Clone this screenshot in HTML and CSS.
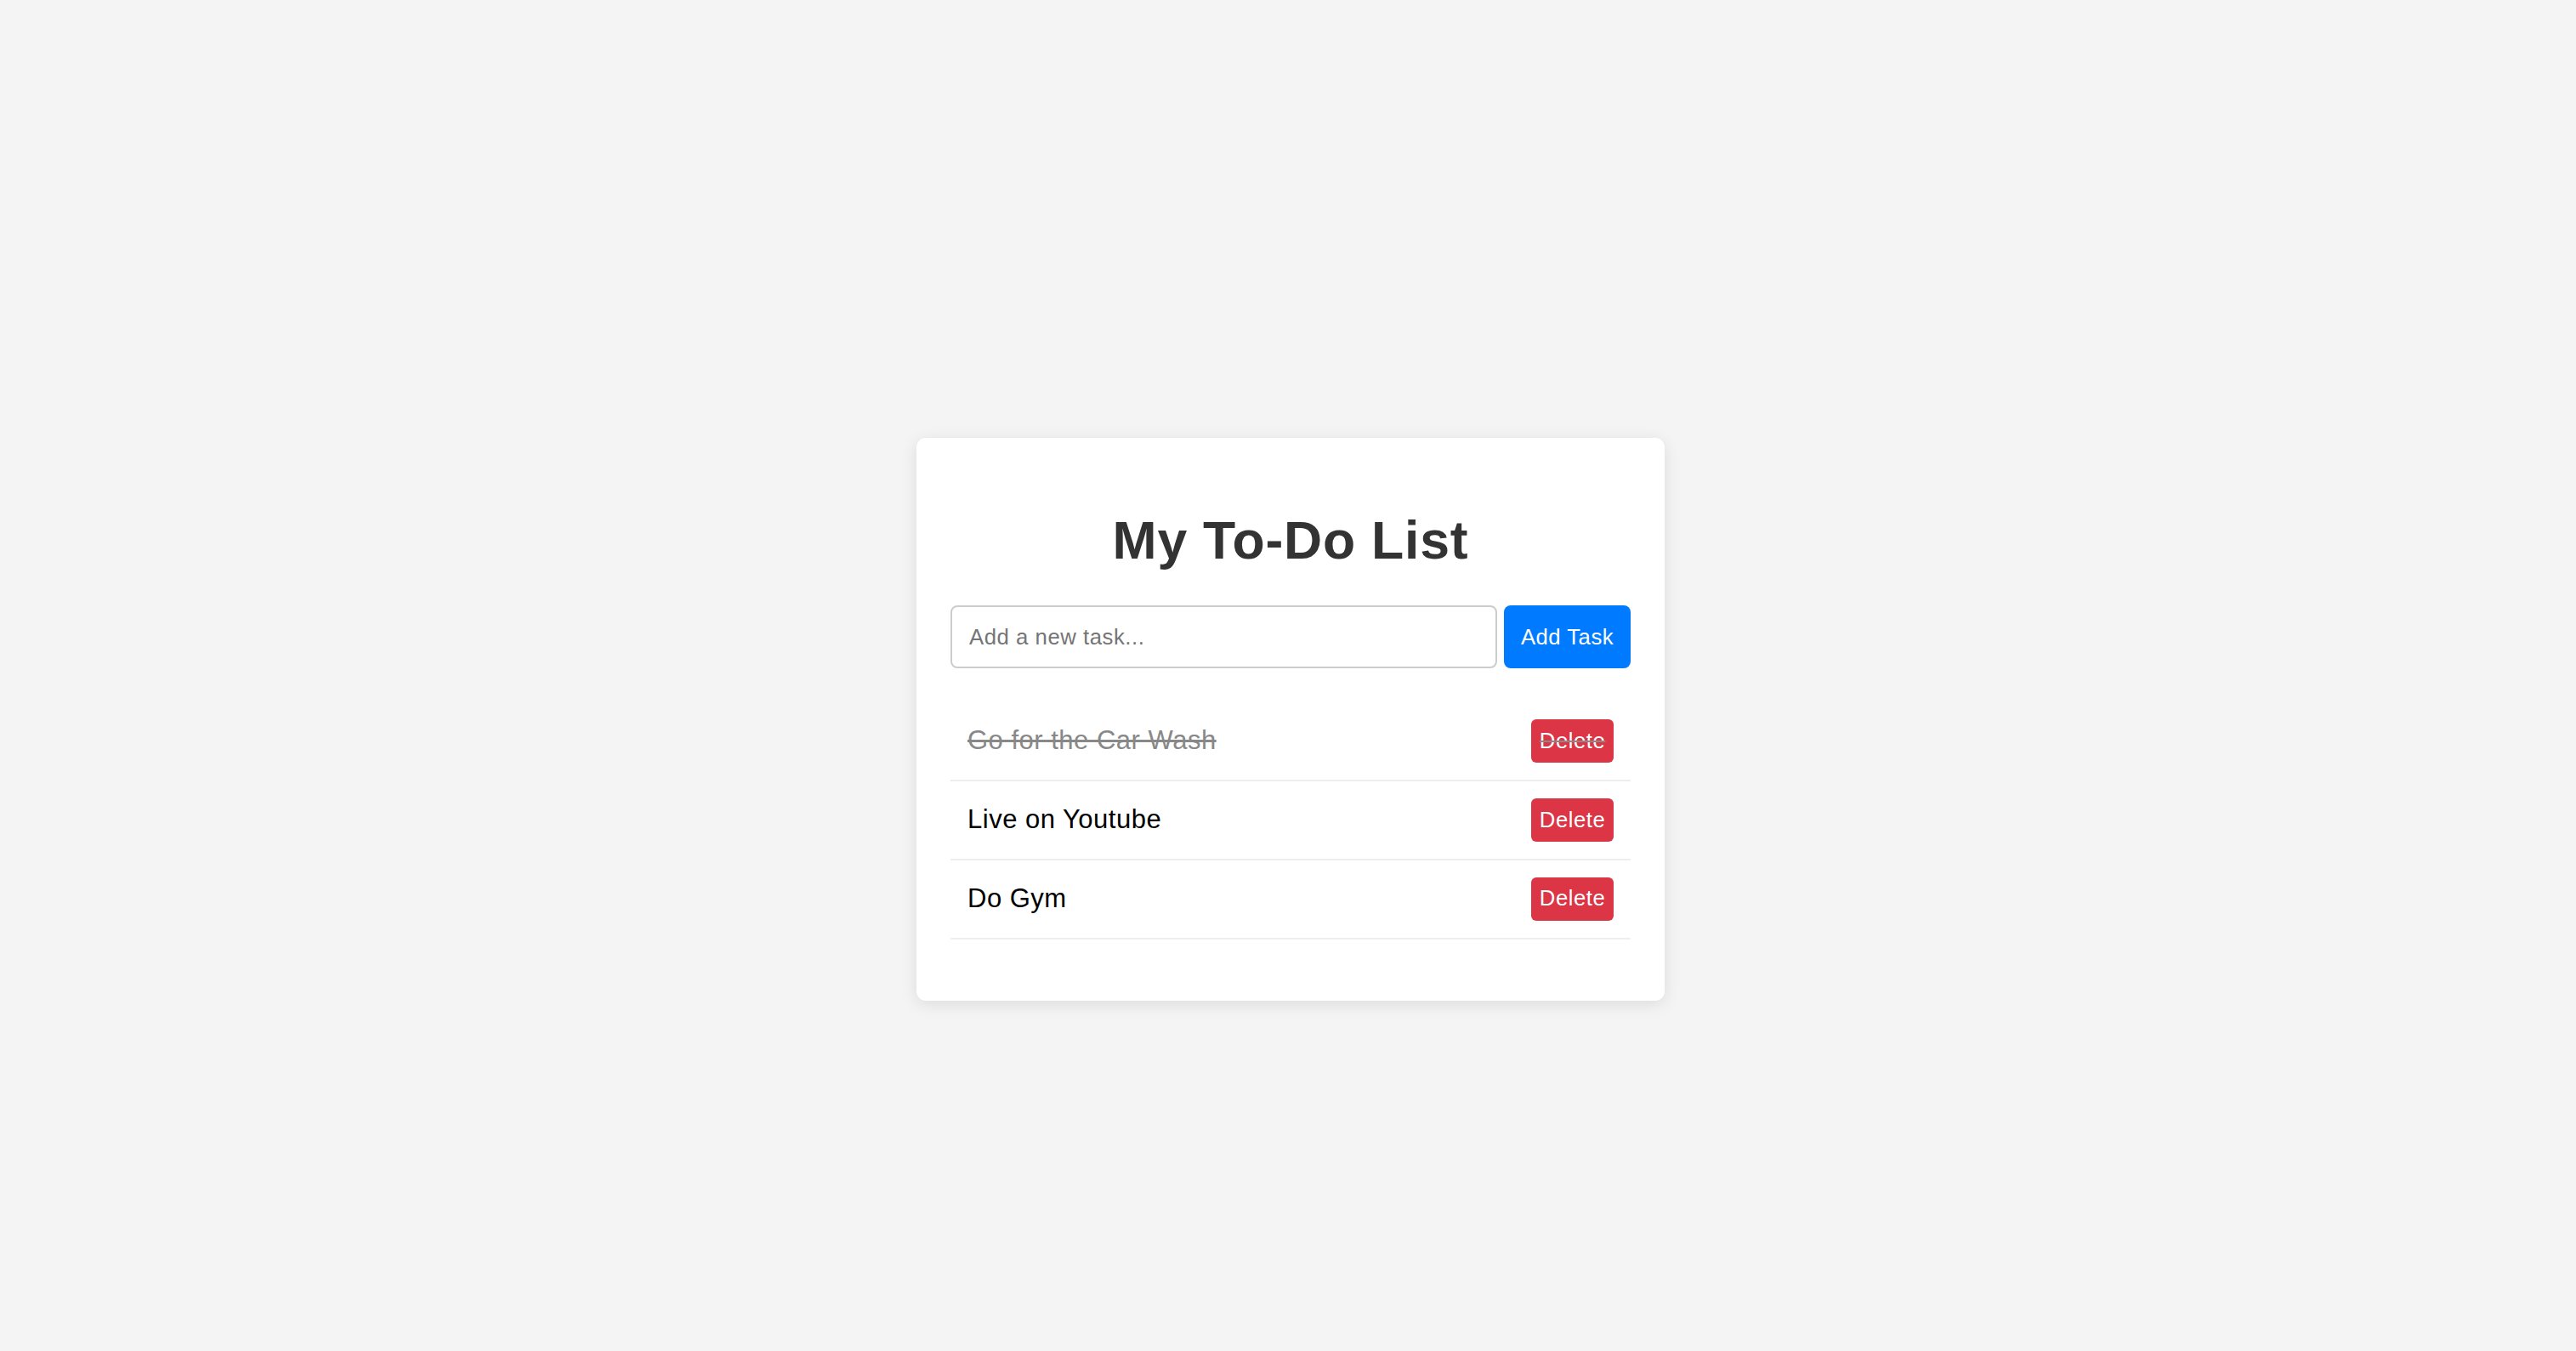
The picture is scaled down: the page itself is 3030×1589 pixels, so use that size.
FILE: index.html
```html
<!DOCTYPE html>
<html lang="en">
<head>
<meta charset="UTF-8">
<title>My To-Do List</title>
<link rel="stylesheet" href="styles.css">
</head>
<body>
  <div class="card">
    <h1 class="title">My To-Do List</h1>
    <div class="add-row">
      <input class="task-input" type="text" placeholder="Add a new task...">
      <button class="add-btn">Add Task</button>
    </div>
    <ul class="task-list">
      <li class="task completed"><span class="task-text">Go for the Car Wash</span><button class="delete-btn">Delete</button></li>
      <li class="task"><span class="task-text">Live on Youtube</span><button class="delete-btn">Delete</button></li>
      <li class="task"><span class="task-text">Do Gym</span><button class="delete-btn">Delete</button></li>
    </ul>
  </div>
</body>
</html>
```

FILE: styles.css
```css
html, body {
  margin: 0;
  height: 100%;
}

body {
  background: #f4f4f4;
  font-family: "Liberation Sans", Arial, sans-serif;
  display: flex;
  justify-content: center;
  align-items: flex-start;
  padding: 515px 0 0 6px;
  box-sizing: border-box;
}

.card {
  width: 880px;
  box-sizing: border-box;
  background: #fff;
  border-radius: 11px;
  padding: 40px;
  box-shadow: 0 4px 19px rgba(0, 0, 0, 0.1);
}

.title {
  margin: 44.5px 0 41.5px;
  font-size: 62.5px;
  line-height: 71px;
  font-weight: bold;
  color: #333;
  text-align: center;
  letter-spacing: 0.8px;
}

.add-row {
  display: flex;
  gap: 8px;
  height: 74px;
}

.task-input {
  flex: 1;
  min-width: 0;
  box-sizing: border-box;
  border: 2px solid #ccc;
  border-radius: 8px;
  padding: 0 20px;
  font-family: "Liberation Sans", Arial, sans-serif;
  font-size: 25.7px;
  letter-spacing: 0.55px;
  color: #000;
  outline: none;
}

.task-input::placeholder {
  color: #757575;
}

.add-btn {
  border: none;
  border-radius: 8px;
  background: #007bff;
  color: #fff;
  font-family: "Liberation Sans", Arial, sans-serif;
  font-size: 25.7px;
  letter-spacing: 0.5px;
  padding: 0 18px;
  width: 149px;
  cursor: pointer;
}

.task-list {
  list-style: none;
  margin: 40px 0 32px;
  padding: 0;
}

.task {
  display: flex;
  justify-content: space-between;
  align-items: center;
  padding: 20px;
  border-bottom: 2px solid #eee;
  font-size: 31px;
  letter-spacing: 0.5px;
  color: #000;
}

.task.completed {
  text-decoration: line-through;
  color: #888;
}

.delete-btn {
  border: none;
  border-radius: 6px;
  background: #dc3545;
  color: #fff;
  font-family: "Liberation Sans", Arial, sans-serif;
  font-size: 25.7px;
  letter-spacing: 0.55px;
  line-height: 29.5px;
  padding: 10.7px 9.6px;
  cursor: pointer;
}
```
